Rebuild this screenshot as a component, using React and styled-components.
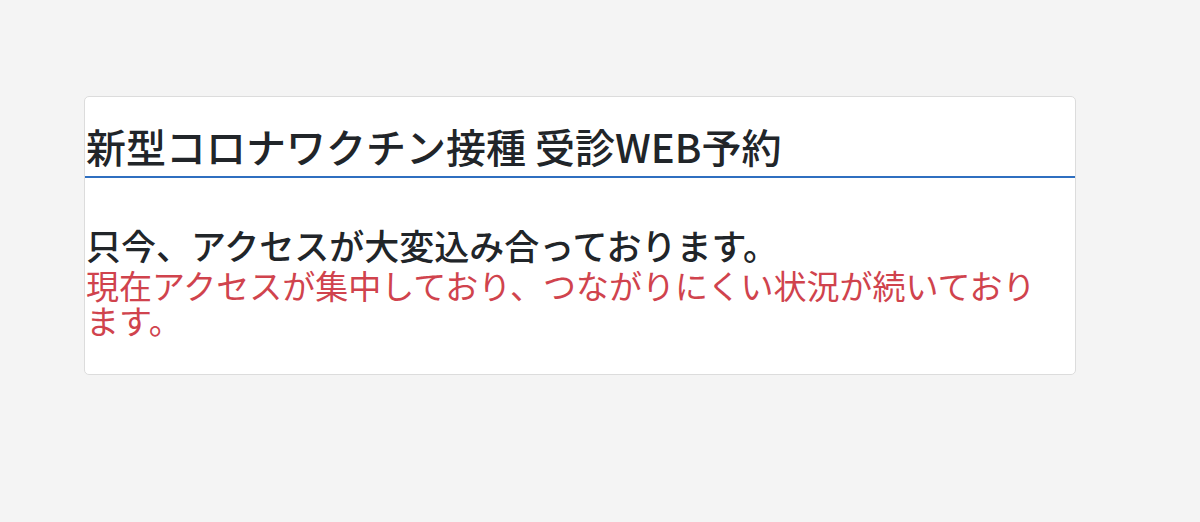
import React from 'react';
import styled, { createGlobalStyle } from 'styled-components';

const GlobalStyle = createGlobalStyle`
  html, body {
    margin: 0;
    padding: 0;
    background: #f4f4f4;
  }
  body {
    font-family: "Noto Sans CJK JP", "Noto Sans", sans-serif;
    color: #212529;
  }
`;

const Page = styled.div`
  padding: 96px 0 0 84px;
`;

const Card = styled.div`
  width: 990px;
  background: #ffffff;
  border: 1px solid #dcdcdc;
  border-radius: 5px;
  padding-bottom: 36px;
`;

const Header = styled.h1`
  margin: 0;
  padding: 25px 0 6px 1px;
  font-size: 40px;
  line-height: 1.2;
  font-weight: 500;
  color: #212529;
  border-bottom: 2px solid #2f6fc0;
`;

const Body = styled.div`
  padding: 46px 30px 0 1px;
`;

const Lead = styled.p`
  margin: 0 0 2px;
  font-size: 35px;
  line-height: 1.2;
  font-weight: 500;
  color: #212529;
`;

const Notice = styled.p`
  margin: 0;
  font-size: 33px;
  line-height: 1.06;
  font-weight: 400;
  color: ${props => props.color || '#d0434d'};
`;

export default function App() {
  return (
    <Page>
      <GlobalStyle />
      <Card>
        <Header>新型コロナワクチン接種 受診WEB予約</Header>
        <Body>
          <Lead>只今、アクセスが大変込み合っております。</Lead>
          <Notice>現在アクセスが集中しており、つながりにくい状況が続いております。</Notice>
        </Body>
      </Card>
    </Page>
  );
}
